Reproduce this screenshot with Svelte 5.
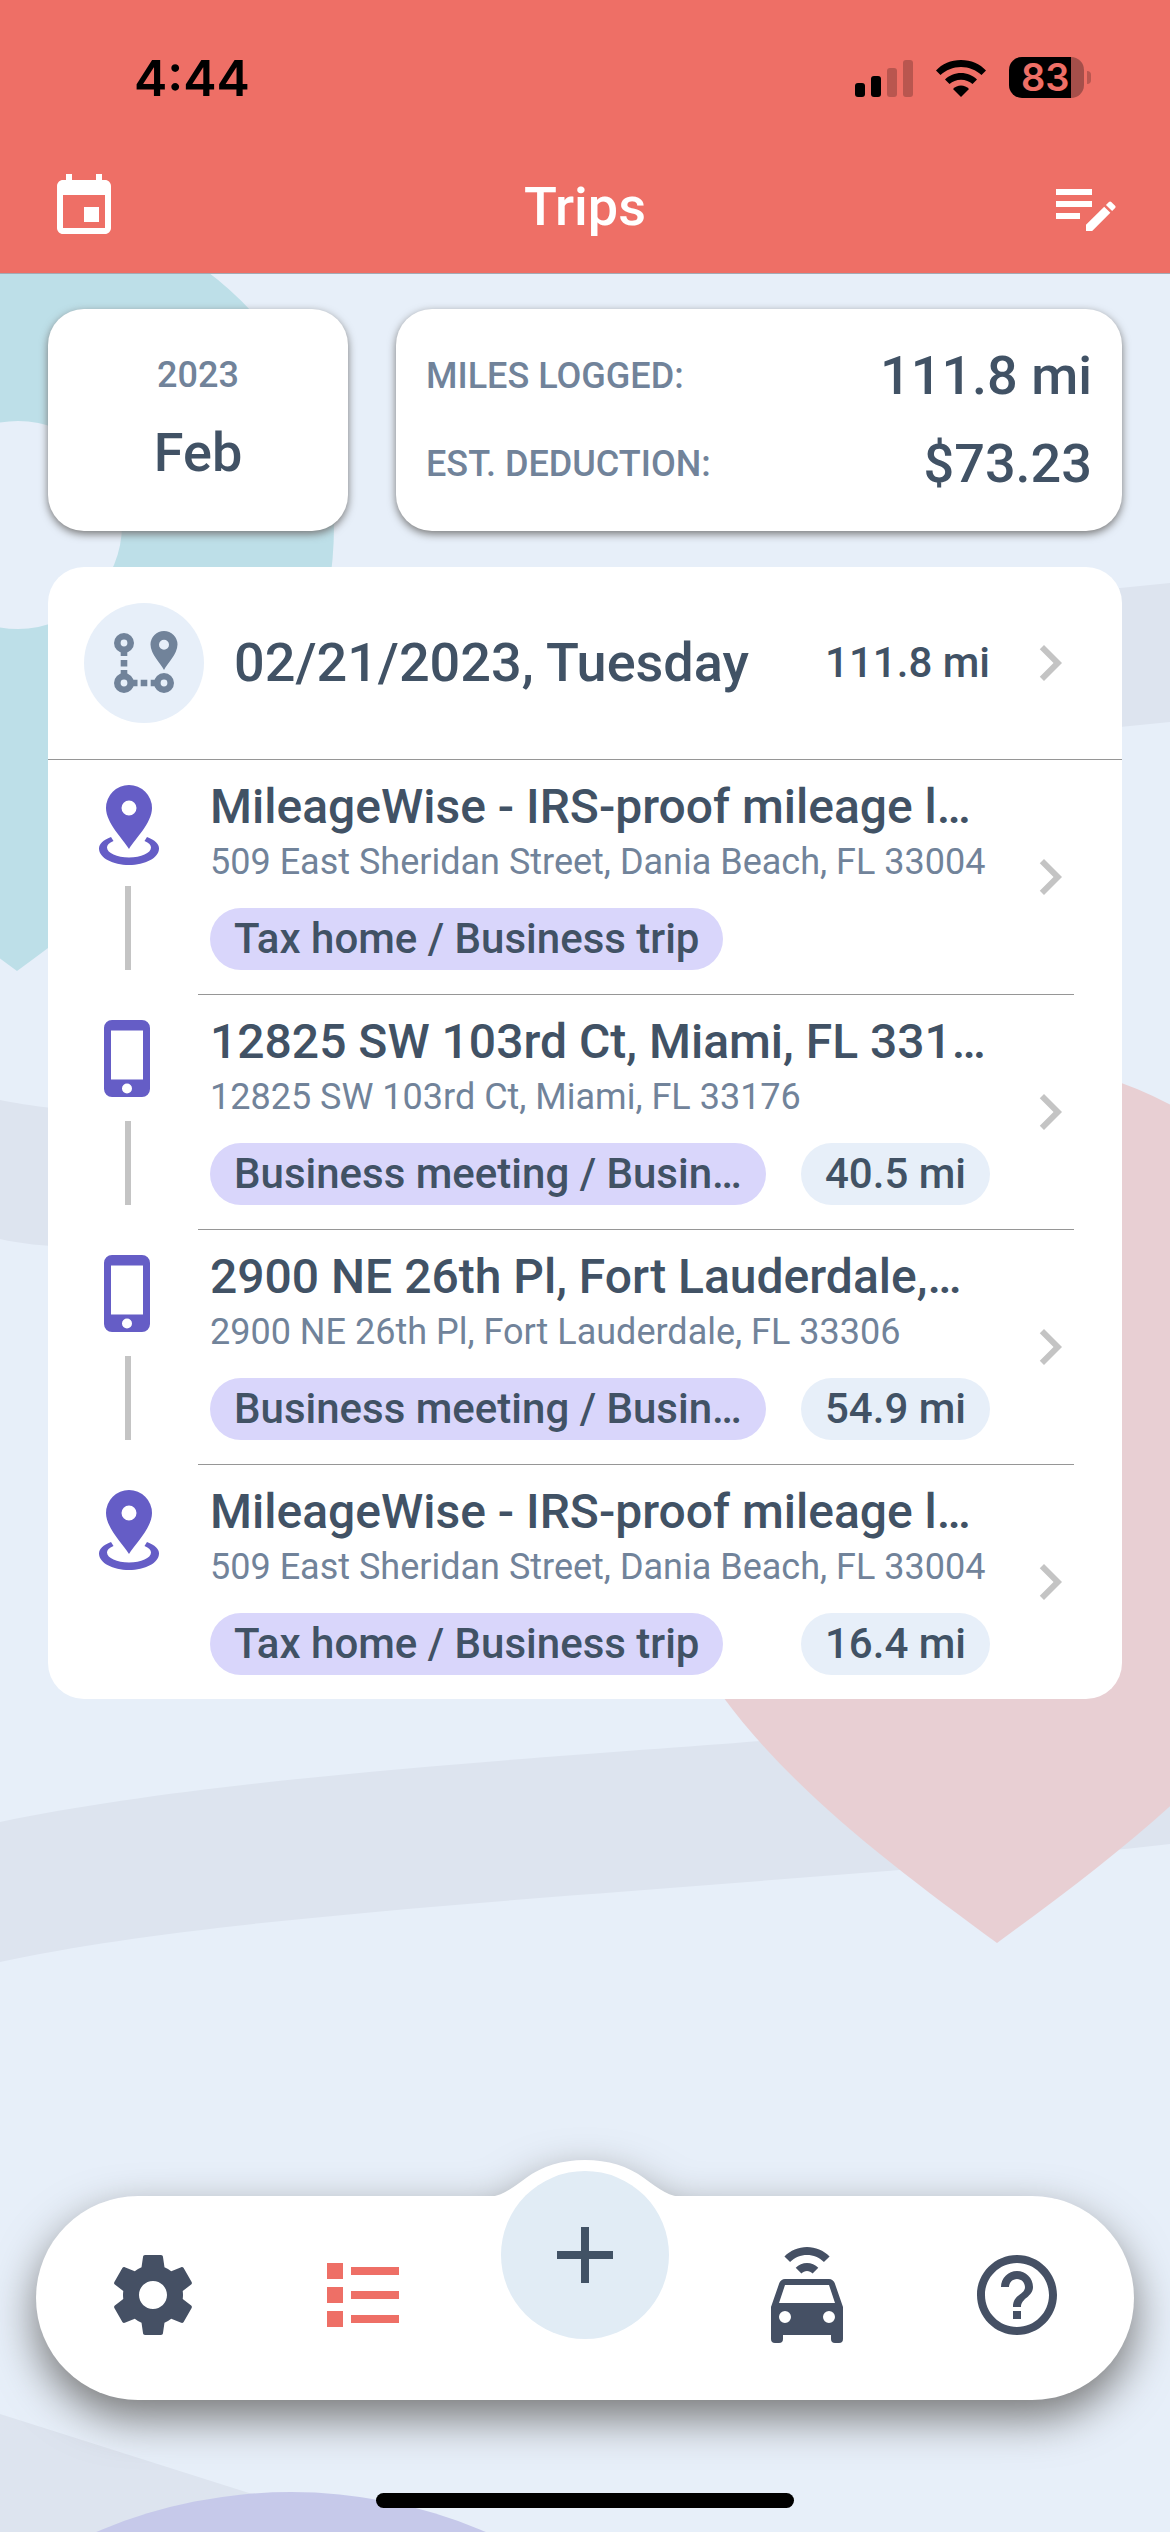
<script>
  const stops = [
    {
      icon: 'pin',
      title: 'MileageWise - IRS-proof mileage l…',
      address: '509 East Sheridan Street, Dania Beach, FL 33004',
      purpose: 'Tax home / Business trip',
      miles: ''
    },
    {
      icon: 'phone',
      title: '12825 SW 103rd Ct, Miami, FL 331…',
      address: '12825 SW 103rd Ct, Miami, FL 33176',
      purpose: 'Business meeting / Busin…',
      miles: '40.5 mi'
    },
    {
      icon: 'phone',
      title: '2900 NE 26th Pl, Fort Lauderdale,…',
      address: '2900 NE 26th Pl, Fort Lauderdale, FL 33306',
      purpose: 'Business meeting / Busin…',
      miles: '54.9 mi'
    },
    {
      icon: 'pin',
      title: 'MileageWise - IRS-proof mileage l…',
      address: '509 East Sheridan Street, Dania Beach, FL 33004',
      purpose: 'Tax home / Business trip',
      miles: '16.4 mi'
    }
  ];
</script>

{#snippet chevron()}
  <svg class="chevron" viewBox="0 0 24 24" aria-hidden="true">
    <path d="M10 6 8.59 7.41 13.17 12l-4.58 4.59L10 18l6-6z" />
  </svg>
{/snippet}

<div class="page">
  <svg class="backdrop" viewBox="0 0 1170 2532" preserveAspectRatio="xMidYMin slice" aria-hidden="true">
    <g fill="#dde4ef">
      <path d="M0 1100C60 1112 300 1150 620 1010L1100 590L1170 583V722L1100 729C900 745 700 900 500 1050C300 1240 100 1262 0 1239z" />
      <path d="M0 1822C220 1776 560 1757 760 1741L1170 1700V1844C760 1890 260 1905 0 1962z" />
      <path d="M0 2414 249 2493 400 2532H0z" />
    </g>
    <path
      fill="#bddfe8"
      fill-rule="evenodd"
      d="M17 971C178 853 334 733 334 525A317 317 0 0 0-300 525C-300 733-144 853 17 971zM18 421a104 104 0 1 1 0 208a104 104 0 0 1 0-208z"
    />
    <path fill="#e8cfd3" d="M997 1943C811 1807 631 1667 631 1427A366 366 0 0 1 1363 1427C1363 1667 1183 1807 997 1943z" />
    <circle cx="291" cy="2987" r="495" fill="#c6c9ea" />
  </svg>

  <header>
    <div class="status">
      <span class="time">4:44</span>
      <div class="indicators">
        <svg width="58" height="38" viewBox="0 0 58 38" role="img" aria-label="Signal">
          <rect x="0" y="24" width="10" height="14" rx="3" />
          <rect x="16" y="17" width="10" height="21" rx="3" />
          <g opacity=".22">
            <rect x="32" y="9" width="10" height="29" rx="3" />
            <rect x="48" y="1" width="10" height="37" rx="3" />
          </g>
        </svg>
        <svg width="52" height="38" viewBox="0 0 52 38" role="img" aria-label="Wi-Fi">
          <path d="M26 1C36 1 45 5 51 11.500L46.500 16C41 11 34 8 26 8S11 11 5.500 16L1 11.500C7 5 16 1 26 1z" />
          <path d="M26 14C32 14 38 16.500 42 20.500L37.500 25C34.500 22.500 30.500 20.800 26 20.800S17.500 22.500 14.500 25L10 20.500C14 16.500 20 14 26 14z" />
          <path d="M26 26.500C29 26.500 32 28 34 30L26 38L18 30C20 28 23 26.500 26 26.500z" />
        </svg>
        <div class="battery">
          <span class="level">83</span>
        </div>
      </div>
    </div>
    <div class="toolbar">
      <button class="tool" aria-label="Calendar">
        <svg viewBox="0 0 24 24">
          <path d="M17 12h-5v5h5v-5zM16 1v2H8V1H6v2H5c-1.110 0-1.990.9-1.990 2L3 19c0 1.100.890 2 2 2h14c1.100 0 2-.9 2-2V5c0-1.100-.9-2-2-2h-1V1h-2zm3 18H5V8h14v11z" />
        </svg>
      </button>
      <h1>Trips</h1>
      <button class="tool" aria-label="Edit list">
        <svg viewBox="0 0 24 24">
          <path d="M2,6V8H14V6H2M2,10V12H14V10H2M20.04,10.13C19.9,10.13 19.76,10.19 19.65,10.3L18.65,11.3L20.7,13.35L21.7,12.35C21.92,12.14 21.92,11.79 21.7,11.58L20.42,10.3C20.31,10.19 20.18,10.13 20.04,10.13M18.07,11.88L12,17.94V20H14.06L20.12,13.93L18.07,11.88M2,14V16H10V14H2Z" />
        </svg>
      </button>
    </div>
  </header>

  <main>
    <section class="summary">
      <button class="card month">
        <span class="label">2023</span>
        <span class="value">Feb</span>
      </button>
      <dl class="card totals">
        <div>
          <dt class="label">MILES LOGGED:</dt>
          <dd class="value">111.8 mi</dd>
        </div>
        <div>
          <dt class="label">EST. DEDUCTION:</dt>
          <dd class="value">$73.23</dd>
        </div>
      </dl>
    </section>

    <section class="trips">
      <button class="day">
        <svg class="route" viewBox="0 0 120 120" aria-hidden="true">
          <circle cx="60" cy="60" r="60" fill="#e7eff9" />
          <g fill="none" stroke="#71839a" stroke-width="6.600">
            <circle cx="40" cy="40" r="6.700" />
            <circle cx="40" cy="80" r="6.700" />
            <circle cx="80" cy="80" r="6.700" />
            <path d="M40 47v6M40 57v6.500M40 67v6M47 80h6.500M56.700 80h6.600M66.700 80h6" />
          </g>
          <path
            fill="#71839a"
            fill-rule="evenodd"
            d="M80 67C77 61 66.500 51 66.500 41.500a13.500 13.500 0 0 1 27 0C93.500 51 83 61 80 67zM80 36.700a5 5 0 1 0 0 10a5 5 0 0 0 0-10z"
          />
        </svg>
        <span class="date">02/21/2023, Tuesday</span>
        <span class="distance">111.8 mi</span>
        {@render chevron()}
      </button>

      <ol>
        {#each stops as stop, i}
          <li>
            <button class="stop">
              <span class="marker">
                {#if stop.icon === 'pin'}
                  <svg viewBox="0 0 62 80" aria-hidden="true">
                    <path
                      fill-rule="evenodd"
                      d="M31 64C25 54 8 38 8 23a23 23 0 0 1 46 0C54 38 37 54 31 64zM31 15.500a7.500 7.500 0 1 0 0 15a7.500 7.500 0 0 0 0-15z"
                    />
                    <path d="M13 52C5 55 1 59 1 63.500C1 73 15 80 31 80S61 73 61 63.500C61 59 57 55 49 52L46.500 56C51 58 53 60 53 62.500C53 68 43 72.500 31 72.500S9 68 9 62.500C9 60 11 58 15.500 56z" />
                  </svg>
                {:else}
                  <svg viewBox="0 0 62 80" aria-hidden="true">
                    <path
                      fill-rule="evenodd"
                      d="M14 0H44a8 8 0 0 1 8 8V69a8 8 0 0 1-8 8H14a8 8 0 0 1-8-8V8a8 8 0 0 1 8-8zM13 10.500V59.500H45V10.500zM29 63.500a5 5 0 1 0 0 10a5 5 0 0 0 0-10z"
                    />
                  </svg>
                {/if}
                {#if i < stops.length - 1}
                  <span class="link"></span>
                {/if}
              </span>
              <span class="details">
                <span class="title">{stop.title}</span>
                <span class="address">{stop.address}</span>
                <span class="chips">
                  <span class="chip purpose">{stop.purpose}</span>
                  {#if stop.miles}
                    <span class="chip miles">{stop.miles}</span>
                  {/if}
                </span>
              </span>
              {@render chevron()}
            </button>
          </li>
        {/each}
      </ol>
    </section>
  </main>

  <footer>
    <nav>
      <svg class="bump" viewBox="0 0 198 38" aria-hidden="true">
        <path d="M0 37C14 37 24 30 40 18C56 6 76 0 99 0S142 6 158 18C174 30 184 37 198 37V38H0z" />
      </svg>
      <div class="group">
        <a href="#settings" aria-label="Settings">
          <svg viewBox="0 0 24 24">
            <path d="M19.430 12.980c.040-.320.070-.640.070-.980s-.030-.660-.070-.980l2.110-1.650c.190-.150.240-.420.120-.640l-2-3.460c-.120-.220-.390-.3-.610-.220l-2.490 1c-.520-.4-1.080-.730-1.690-.980l-.380-2.650C14.460 2.180 14.250 2 14 2h-4c-.250 0-.460.180-.490.420l-.380 2.650c-.610.250-1.170.590-1.690.980l-2.490-1c-.230-.090-.490 0-.610.220l-2 3.460c-.130.220-.070.490.120.640l2.110 1.650c-.040.320-.070.650-.070.980s.030.660.070.980l-2.110 1.650c-.190.150-.240.420-.120.640l2 3.460c.120.220.390.3.610.220l2.490-1c.520.4 1.080.730 1.690.980l.380 2.650c.030.240.240.420.490.420h4c.250 0 .460-.180.490-.420l.380-2.650c.610-.250 1.170-.590 1.690-.980l2.490 1c.230.090.490 0 .610-.220l2-3.460c.120-.220.070-.490-.120-.640l-2.110-1.650zM12 15.500c-1.930 0-3.500-1.570-3.500-3.500s1.570-3.500 3.500-3.500 3.500 1.570 3.500 3.500-1.570 3.500-3.500 3.500z" />
          </svg>
        </a>
        <a class="active" href="#trips" aria-label="Trips" aria-current="page">
          <svg viewBox="0 0 24 24">
            <path d="M3,4H7V8H3V4M9,5V7H21V5H9M3,10H7V14H3V10M9,11V13H21V11H9M3,16H7V20H3V16M9,17V19H21V17H9" />
          </svg>
        </a>
      </div>
      <button class="add" aria-label="Add trip">
        <svg viewBox="0 0 56 56"><path d="M24 0h8v24h24v8H32v24h-8V32H0v-8h24z" /></svg>
      </button>
      <div class="group">
        <a href="#vehicles" aria-label="Vehicles">
          <svg viewBox="0 0 24 24">
            <path d="M5,14H19L17.5,9.5H6.5L5,14M17.5,19A1.5,1.5 0 0,0 19,17.5A1.5,1.5 0 0,0 17.5,16A1.5,1.5 0 0,0 16,17.5A1.5,1.5 0 0,0 17.5,19M6.5,19A1.5,1.5 0 0,0 8,17.5A1.5,1.5 0 0,0 6.5,16A1.5,1.5 0 0,0 5,17.5A1.5,1.5 0 0,0 6.5,19M18.92,9L21,15V23A1,1 0 0,1 20,24H19A1,1 0 0,1 18,23V22H6V23A1,1 0 0,1 5,24H4A1,1 0 0,1 3,23V15L5.080,9C5.280,8.420 5.850,8 6.500,8H17.500C18.150,8 18.720,8.420 18.920,9M12,0C14.120,0 16.150,.860 17.650,2.350L16.230,3.770C15.110,2.650 13.580,2 12,2C10.420,2 8.890,2.650 7.770,3.770L6.360,2.350C7.850,.860 9.880,0 12,0M12,4C13.060,4 14.070,4.440 14.820,5.180L13.400,6.600C13.030,6.230 12.530,6 12,6C11.470,6 10.970,6.230 10.600,6.600L9.180,5.180C9.930,4.440 10.940,4 12,4Z" />
          </svg>
        </a>
        <a href="#help" aria-label="Help">
          <svg viewBox="0 0 24 24">
            <path d="M11 18h2v-2h-2v2zm1-16C6.480 2 2 6.480 2 12s4.480 10 10 10 10-4.480 10-10S17.520 2 12 2zm0 18c-4.410 0-8-3.590-8-8s3.590-8 8-8 8 3.590 8 8-3.590 8-8 8zm0-14c-2.210 0-4 1.790-4 4h2c0-1.100.9-2 2-2s2 .9 2 2c0 2-3 1.750-3 5h2c0-2.250 3-2.500 3-5 0-2.210-1.790-4-4-4z" />
          </svg>
        </a>
      </div>
    </nav>
    <div class="home"></div>
  </footer>
</div>

<style>
  :global(body) {
    background: #e7eff9;
  }

  .page {
    position: relative;
    display: flex;
    flex-direction: column;
    min-height: 100vh;
    overflow: hidden;
    font-family: Roboto, 'Liberation Sans', sans-serif;
    font-weight: 500;
    color: #415265;
  }

  .backdrop {
    position: absolute;
    inset: 0;
    width: 100%;
    height: 100%;
  }

  button {
    margin: 0;
    padding: 0;
    border: 0;
    background: none;
    font: inherit;
    color: inherit;
    text-align: left;
    cursor: pointer;
  }

  svg {
    display: block;
    flex: none;
  }

  header,
  main,
  footer {
    position: relative;
  }

  header {
    background: #ee6f66;
    border-bottom: 1px solid #a3aab4;
  }

  .status {
    display: flex;
    align-items: center;
    justify-content: space-between;
    height: 141px;
    padding: 14px 79px 0 134px;
    box-sizing: border-box;
    color: #000;
  }

  .time {
    font: 600 50px/60px Inter, sans-serif;
  }

  .indicators {
    display: flex;
    align-items: center;
    gap: 22px;
  }

  .battery {
    position: relative;
    width: 75px;
    height: 41px;
    margin-right: 7px;
    border-radius: 13px;
    background: linear-gradient(90deg, #000 62px, #a54f4a 62px);
  }

  .battery::after {
    content: '';
    position: absolute;
    top: 14px;
    right: -7px;
    width: 4px;
    height: 13px;
    border-radius: 0 4px 4px 0;
    background: #b95750;
  }

  .level {
    display: block;
    padding-left: 12px;
    font: 600 38px/41px Inter, sans-serif;
    color: #ee6f66;
  }

  .toolbar {
    display: flex;
    align-items: center;
    justify-content: space-between;
    height: 132px;
    padding: 0 48px;
    color: #fff;
  }

  .tool svg {
    width: 72px;
    height: 72px;
    fill: currentColor;
  }

  h1 {
    margin: 0;
    font-size: 54px;
    font-weight: 500;
    line-height: 64px;
  }

  main {
    display: flex;
    flex-direction: column;
    gap: 36px;
    padding: 35px 48px 48px;
  }

  .summary {
    display: grid;
    grid-template-columns: 300px 1fr;
    gap: 48px;
  }

  .card {
    display: flex;
    flex-direction: column;
    justify-content: center;
    box-sizing: border-box;
    min-height: 222px;
    margin: 0;
    border-radius: 36px;
    background: #fff;
    box-shadow: 0 3px 8px #777;
  }

  .month {
    align-items: center;
    gap: 22px;
    padding-bottom: 4px;
  }

  .totals {
    gap: 24px;
    padding: 0 30px;
  }

  .totals div {
    display: flex;
    align-items: center;
    justify-content: space-between;
  }

  dd {
    margin: 0;
  }

  .label {
    font-size: 36px;
    line-height: 48px;
    color: #71839a;
  }

  .value {
    font-size: 54px;
    line-height: 64px;
  }

  .trips {
    border-radius: 36px;
    background: #fff;
  }

  .day {
    display: flex;
    align-items: center;
    width: 100%;
    padding: 36px;
    border-bottom: 1px solid #969696;
  }

  .route {
    width: 120px;
    height: 120px;
    margin-right: 30px;
  }

  .date {
    flex: 1;
    font-size: 54px;
    line-height: 64px;
  }

  .distance {
    font-size: 42px;
    line-height: 62px;
  }

  .chevron {
    width: 72px;
    height: 72px;
    margin-left: 24px;
    fill: #c4c4c4;
  }

  ol {
    margin: 0;
    padding: 0;
    list-style: none;
  }

  li:not(:last-child)::after {
    content: '';
    display: block;
    height: 1px;
    margin: 0 48px 0 150px;
    background: #969696;
  }

  .stop {
    display: flex;
    align-items: center;
    width: 100%;
    padding: 0 36px 0 50px;
  }

  .marker {
    display: flex;
    flex-direction: column;
    align-self: stretch;
    gap: 21px;
    width: 62px;
    margin-right: 50px;
    padding: 25px 0 24px;
  }

  .marker svg {
    width: 62px;
    height: 80px;
    fill: #655dc6;
  }

  .link {
    flex: 1;
    width: 6px;
    margin-left: 27px;
    background: #c4c4c4;
  }

  .details {
    display: flex;
    flex: 1;
    flex-direction: column;
    min-width: 0;
    padding: 17px 0 24px;
  }

  .title,
  .address,
  .purpose {
    overflow: hidden;
    text-overflow: ellipsis;
    white-space: nowrap;
  }

  .title {
    font-size: 48px;
    line-height: 60px;
  }

  .address {
    font-size: 36px;
    font-weight: 400;
    line-height: 50px;
    color: #71839a;
  }

  .chips {
    display: flex;
    justify-content: space-between;
    gap: 32px;
    margin-top: 21px;
  }

  .chip {
    padding: 0 24px;
    border-radius: 31px;
    font-size: 42px;
    line-height: 62px;
    white-space: nowrap;
  }

  .purpose {
    background: #d9d6fb;
  }

  .miles {
    flex: none;
    background: #e7eff9;
  }

  footer {
    display: flex;
    flex-direction: column;
    align-items: center;
    gap: 93px;
    margin-top: auto;
    padding: 0 36px 24px;
  }

  nav {
    position: relative;
    display: flex;
    align-items: center;
    justify-content: space-between;
    align-self: stretch;
    height: 204px;
    padding: 0 69px 6px;
    box-sizing: border-box;
    border-radius: 102px;
    background: #fff;
    filter: drop-shadow(0 18px 22px #777);
    color: #455064;
  }

  .bump {
    position: absolute;
    top: -36px;
    left: 50%;
    width: 198px;
    height: 38px;
    margin-left: -99px;
    fill: #fff;
  }

  .group {
    display: flex;
    gap: 114px;
  }

  .group a {
    color: inherit;
  }

  .group a.active {
    color: #ee6f66;
  }

  .group svg {
    width: 96px;
    height: 96px;
    fill: currentColor;
  }

  .add {
    position: relative;
    display: grid;
    place-items: center;
    align-self: flex-start;
    width: 168px;
    height: 168px;
    margin-top: -25px;
    border-radius: 50%;
    background: #e1ecf5;
  }

  .add svg {
    width: 56px;
    height: 56px;
    fill: #415265;
  }

  .home {
    width: 418px;
    height: 15px;
    border-radius: 8px;
    background: #000;
  }
</style>
